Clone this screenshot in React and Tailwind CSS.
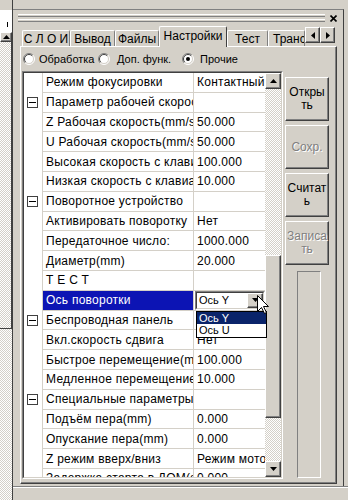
import React from 'react'

const raised =
  'border border-t-white border-l-white border-r-[#404040] border-b-[#404040] shadow-[inset_-1px_-1px_0_#808080]'
const dither = 'bg-[repeating-conic-gradient(#d4d0c8_0_25%,#ffffff_0_50%)] bg-[length:2px_2px]'

const rows = [
  { name: 'Режим фокусировки', value: 'Контактный' },
  { name: 'Параметр рабочей скорости', group: true },
  { name: 'Z Рабочая скорость(mm/s)', value: '50.000' },
  { name: 'U Рабочая скорость(mm/s)', value: '50.000' },
  { name: 'Высокая скорость с клавиатуры', value: '100.000' },
  { name: 'Низкая скорость с клавиатуры', value: '10.000' },
  { name: 'Поворотное устройство', group: true },
  { name: 'Активировать поворотку', value: 'Нет' },
  { name: 'Передаточное число:', value: '1000.000' },
  { name: 'Диаметр(mm)', value: '20.000' },
  { name: 'ТЕСТ', spaced: true },
  { name: 'Ось поворотки', selected: true, combo: 'Ось Y' },
  { name: 'Беспроводная панель', group: true },
  { name: 'Вкл.скорость сдвига', value: 'Нет' },
  { name: 'Быстрое перемещение(mm/s)', value: '100.000' },
  { name: 'Медленное перемещение(mm/s)', value: '10.000' },
  { name: 'Специальные параметры:', group: true },
  { name: 'Подъём пера(mm)', value: '0.000' },
  { name: 'Опускание пера(mm)', value: '0.000' },
  { name: 'Z режим вверх/вниз', value: 'Режим мотора' },
  { name: 'Задержка старта в ДОМ(s)', value: '0.000' },
]

const tabs = [
  { label: 'С Л О И', w: 'w-[48px]' },
  { label: 'Вывод', w: 'w-[45px]' },
  { label: 'Файлы', w: 'w-[44px]' },
  { label: 'Настройки', w: 'w-[68px]', active: true },
  { label: 'Тест', w: 'w-[41px]' },
  { label: 'Транс', w: 'w-[37px]', clip: true },
]

const Tri = ({ dir }) => {
  const pts = {
    up: '3.5,0 7,4 0,4',
    down: '0,0 7,0 3.5,4',
    left: '4,0 4,7 0,3.5',
    right: '0,0 0,7 4,3.5',
  }[dir]
  const horiz = dir === 'left' || dir === 'right'
  return (
    <svg width={horiz ? 4 : 7} height={horiz ? 7 : 4}>
      <polygon points={pts} fill="#000" />
    </svg>
  )
}

function Radio({ checked }) {
  return (
    <svg width="12" height="12" viewBox="0 0 12 12" className="shrink-0">
      <circle cx="6" cy="6" r="5" fill="#fff" />
      <path d="M2.1 9.9 A5.5 5.5 0 0 1 9.9 2.1" stroke="#808080" fill="none" />
      <path d="M9.9 2.1 A5.5 5.5 0 0 1 2.1 9.9" stroke="#fff" fill="none" />
      <path d="M2.8 9.2 A4.5 4.5 0 0 1 9.2 2.8" stroke="#404040" fill="none" />
      <path d="M9.2 2.8 A4.5 4.5 0 0 1 2.8 9.2" stroke="#d4d0c8" fill="none" />
      {checked && <circle cx="6" cy="6" r="2" fill="#000" />}
    </svg>
  )
}

function Row({ r }) {
  return (
    <div className="flex h-[19.8px] shrink-0">
      <div className="w-[19px] shrink-0 border-r border-[#d4d0c8] flex items-center pl-[3px]">
        {r.group && (
          <div className="w-[11px] h-[11px] border border-[#404040] bg-white flex items-center justify-center">
            <div className="w-[7px] h-px bg-black" />
          </div>
        )}
      </div>
      <div
        className={`w-[151px] shrink-0 border-r border-b border-[#d4d0c8] flex items-center pl-[3px] overflow-hidden whitespace-nowrap ${
          r.selected ? 'bg-[#0c14b4] text-white' : ''
        }`}
      >
        {r.spaced ? <span className="tracking-[4px]">ТЕСТ</span> : r.name}
      </div>
      <div className="flex-1 border-b border-[#d4d0c8] flex items-center overflow-hidden whitespace-nowrap">
        {r.combo ? (
          <div className="ml-px h-full flex-1 border border-t-[#808080] border-l-[#808080] border-r-white border-b-white">
            <div className="h-full flex items-center bg-white border border-t-[#404040] border-l-[#404040] border-r-[#d4d0c8] border-b-[#d4d0c8]">
              <span className="flex-1 pl-[2px] text-[11px] tracking-normal">{r.combo}</span>
              <div className={`w-[16px] h-full bg-[#d4d0c8] flex items-center justify-center ${raised}`}>
                <Tri dir="down" />
              </div>
            </div>
          </div>
        ) : (
          <span className="pl-[3px]">{r.value}</span>
        )}
      </div>
    </div>
  )
}

function Button({ lines, disabled }) {
  return (
    <div
      className={`h-[44px] bg-[#d4d0c8] flex flex-col items-center justify-center leading-[13px] ${raised} ${
        disabled ? 'text-[#808080] [text-shadow:1px_1px_0_#fff]' : 'text-black'
      }`}
    >
      {lines.map((l) => (
        <span key={l}>{l}</span>
      ))}
    </div>
  )
}

export default function App() {
  return (
    <div className="w-[348px] h-[500px] overflow-hidden bg-[#d4d0c8] flex font-['Liberation_Sans',Arial,sans-serif] text-[12px] text-black select-none">
      {/* left docked list remnant */}
      <div className="w-[13px] shrink-0 flex flex-col border-r border-[#404040]">
        <div className="h-[10px]" />
        <div className="h-[22px] bg-white relative">
          <div className="absolute left-[7px] top-[12px] w-px h-[5px] bg-black" />
        </div>
        <div className={`h-[10px] bg-[#d4d0c8] flex items-center justify-center ${raised}`}>
          <Tri dir="up" />
        </div>
        <div className={`h-[287px] ${dither} border-r border-b border-[#404040]`} />
        <div className={`flex-1 ${dither}`} />
      </div>

      {/* right settings panel */}
      <div className="flex-1 flex flex-col">
        <div className="h-[9px]" />
        <div className="h-[477px] flex">
          <div className="w-[331px] border-t border-r border-t-[#808080] border-r-[#404040] flex flex-col">
            {/* gripper */}
            <div className="h-[16px] flex items-center">
              <div className="ml-[5px] w-[307px] flex flex-col gap-[2px]">
                <div className="h-[3px] border-t border-b border-t-white border-b-[#808080]" />
                <div className="h-[3px] border-t border-b border-t-white border-b-[#808080]" />
              </div>
              <svg width="7" height="7" className="ml-[5px] mt-[1px]">
                <path d="M0.5 0.5 L6.5 6.5 M6.5 0.5 L0.5 6.5" stroke="#000" strokeWidth="1.6" />
              </svg>
            </div>

            {/* tabs */}
            <div className="h-[20px] flex pl-[9px]">
              <div className="w-[283px] flex items-end">
                {tabs.map((t) =>
                  t.active ? (
                    <div
                      key={t.label}
                      className={`${t.w} shrink-0 h-[21px] mb-[-1px] relative z-10 bg-[#d4d0c8] border-t border-l border-r border-t-white border-l-white border-r-[#404040] rounded-t-[2px] flex items-center justify-center pb-[2px]`}
                    >
                      {t.label}
                    </div>
                  ) : (
                    <div
                      key={t.label}
                      className={`${t.w} shrink-0 h-[16px] border-t border-l border-r border-t-white border-l-white border-r-[#808080] rounded-t-[2px] flex items-center overflow-hidden whitespace-nowrap ${
                        t.clip ? 'pl-[4px]' : 'justify-center'
                      }`}
                    >
                      {t.label}
                    </div>
                  )
                )}
              </div>
              <div className="flex mt-[1px] h-[16px] relative z-20">
                <div className={`w-[15px] bg-[#d4d0c8] flex items-center justify-center ${raised}`}>
                  <Tri dir="left" />
                </div>
                <div className={`w-[15px] bg-[#d4d0c8] flex items-center justify-center ${raised}`}>
                  <Tri dir="right" />
                </div>
              </div>
            </div>

            {/* tab body */}
            <div className={`ml-[7px] w-[317px] h-[438px] flex flex-col ${raised}`}>
              <div className="h-[24px] flex items-center pl-[2px] text-[11px]">
                <div className="w-[75px] flex items-center gap-[4px]">
                  <Radio />
                  <span>Обработка</span>
                </div>
                <div className="w-[84px] flex items-center gap-[7px]">
                  <Radio />
                  <span>Доп. функ.</span>
                </div>
                <div className="flex items-center gap-[6px]">
                  <Radio checked />
                  <span>Прочие</span>
                </div>
              </div>

              <div className="h-[408px] flex">
                {/* property grid */}
                <div className="ml-px w-[261px] h-full relative border border-t-[#808080] border-l-[#808080] border-r-white border-b-white">
                  <div className="h-full flex bg-white border border-t-[#404040] border-l-[#404040] border-r-[#d4d0c8] border-b-[#d4d0c8]">
                    <div className="w-[241px] h-full overflow-hidden flex flex-col tracking-[0.25px]">
                      {rows.map((r) => (
                        <Row key={r.name} r={r} />
                      ))}
                    </div>
                    <div className="w-[16px] h-full flex flex-col">
                      <div className={`h-[16px] shrink-0 bg-[#d4d0c8] flex items-center justify-center ${raised}`}>
                        <Tri dir="up" />
                      </div>
                      <div className={`h-[166px] ${dither}`} />
                      <div className={`h-[163px] bg-[#d4d0c8] ${raised}`} />
                      <div className={`flex-1 ${dither}`} />
                      <div className={`h-[16px] shrink-0 bg-[#d4d0c8] flex items-center justify-center ${raised}`}>
                        <Tri dir="down" />
                      </div>
                    </div>
                  </div>

                  {/* open combo list */}
                  <div className="absolute left-[173px] top-[239px] w-[71px] h-[27px] bg-white border border-black text-[11px] leading-[12px] z-10">
                    <div className="h-[12px] bg-[#0a246a] text-white pl-[2px]">Ось Y</div>
                    <div className="h-[12px] pl-[2px]">Ось U</div>
                  </div>

                  {/* mouse cursor */}
                  <svg width="13" height="20" className="absolute left-[234px] top-[223px] z-20">
                    <path
                      d="M0.5 0.5 L0.5 16.5 L4.5 12.5 L7.5 18.5 L9.5 17.5 L6.5 11.5 L11.5 11.5 Z"
                      fill="#fff"
                      stroke="#000"
                    />
                  </svg>
                </div>

                {/* action buttons */}
                <div className="ml-[2px] w-[44px] flex flex-col gap-[4px] pt-[6px]">
                  <Button lines={['Откры', 'ть']} />
                  <Button lines={['Сохр.']} disabled />
                  <Button lines={['Считат', 'ь']} />
                  <Button lines={['Записа', 'ть']} disabled />
                  <div className="mt-[2px] ml-[12px] w-[24px] h-[207px] border border-t-[#808080] border-l-[#808080] border-r-white border-b-white" />
                </div>
              </div>
            </div>
          </div>
          <div className="flex-1" />
        </div>
        <div className="flex-1 border-t border-[#808080]">
          <div className="h-px bg-white" />
        </div>
      </div>
    </div>
  )
}
